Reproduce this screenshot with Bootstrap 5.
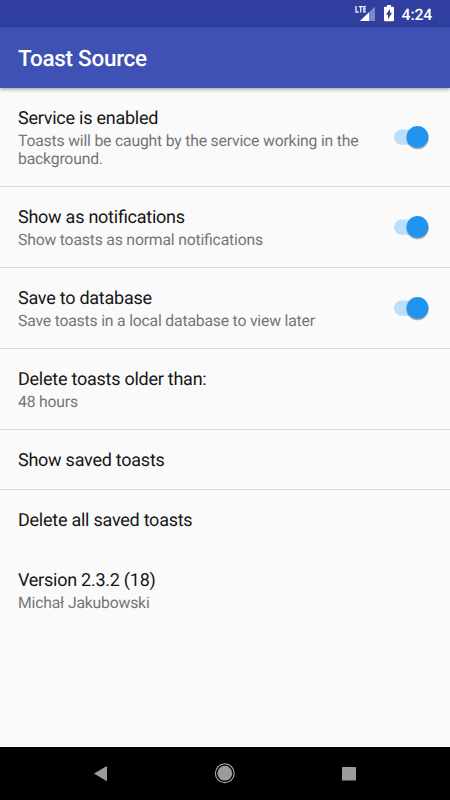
<!DOCTYPE html>
<html lang="en">
<head>
<meta charset="utf-8">
<meta name="viewport" content="width=device-width, initial-scale=1">
<title>Toast Source</title>
<link href="https://cdn.jsdelivr.net/npm/bootstrap@5.3.0/dist/css/bootstrap.min.css" rel="stylesheet">
<style>
body { font-family: Roboto, "Liberation Sans", sans-serif; background: #fafafa; height: 800px; overflow: hidden; text-rendering: geometricPrecision; font-feature-settings: "liga" 1; }
.status-strip { height: 27px; background: #303f9f; padding-right: 18px; }
.status-clock { font-size: 15.75px; line-height: 27px; font-weight: 500; letter-spacing: -.15px; margin-left: 6px; padding-top: 1px; }
.app-head { height: 61px; background: #3f51b5; padding: 2px 18px 0; box-shadow: 0 1px 4px rgba(0,0,0,.42); z-index: 1; }
.app-title { font-size: 22.5px; line-height: 26px; font-weight: 500; letter-spacing: -.28px; }
.pref { padding: 20px 18px 17px; border: 0; border-bottom: 1px solid #dadada; background: transparent; border-radius: 0; height: 81.25px; }
.pref-tall { height: 98.5px; }
.pref-short { height: 60px; }
.pref-last { border-bottom: 0; }
.pref-name { font-size: 18px; line-height: 21px; letter-spacing: -.25px; color: #161616; }
.pref-note { font-size: 15.75px; line-height: 18px; letter-spacing: -.19px; color: #757575; margin-top: 3px; }
.toggle { width: 40px; height: 32px; margin: -3px -1px 0 0; }
.nav-strip { height: 53px; background: #000; }
</style>
</head>
<body class="d-flex flex-column">
<div class="status-strip d-flex justify-content-end align-items-center text-white flex-shrink-0">
  <svg width="42" height="27" viewBox="0 0 42 27" aria-hidden="true">
    <path d="M2 6v6.200h2.800M4.800 6.600h4M6.800 6.600v5.900M12 6.600H9.900v5.300H12M9.900 9.200h2" fill="none" stroke="#fff" stroke-width="1.2"/>
    <path d="M21 6.500v14.500H6z" fill="#7f89c5"/>
    <path d="M15 12.300v8.700H6z" fill="#fff"/>
    <path d="M33 5h4v1.700h2q1 0 1 1v12.500q0 1-1 1h-8q-1 0-1-1V7.700q0-1 1-1h2z" fill="#fff"/>
    <path d="M36 8.700v4h2l-4 6.600v-4.600h-2z" fill="#303f9f"/>
  </svg>
  <span class="status-clock">4:24</span>
</div>
<header class="app-head d-flex align-items-center position-relative flex-shrink-0 text-white">
  <h1 class="app-title mb-0">Toast Source</h1>
</header>
<svg class="d-none" aria-hidden="true">
  <symbol id="switch-on" viewBox="0 0 40 32">
    <rect x="1" y="8.600" width="31" height="15.200" rx="7.600" fill="#bbdefb"/>
    <circle cx="24.500" cy="17.400" r="11.200" fill="#000" opacity=".16"/>
    <circle cx="24.500" cy="16.900" r="11" fill="#000" opacity=".2"/>
    <circle cx="24.500" cy="15.900" r="10.900" fill="#2194f0"/>
  </symbol>
</svg>
<main class="list-group list-group-flush flex-grow-1 rounded-0">
  <div class="list-group-item pref pref-tall d-flex justify-content-between align-items-center">
    <div><div class="pref-name">Service is enabled</div><div class="pref-note">Toasts will be caught by the service working in the<br>background.</div></div>
    <svg class="toggle flex-shrink-0" role="img" aria-label="On"><use href="#switch-on"/></svg>
  </div>
  <div class="list-group-item pref d-flex justify-content-between align-items-center">
    <div><div class="pref-name">Show as notifications</div><div class="pref-note">Show toasts as normal notifications</div></div>
    <svg class="toggle flex-shrink-0" role="img" aria-label="On"><use href="#switch-on"/></svg>
  </div>
  <div class="list-group-item pref d-flex justify-content-between align-items-center">
    <div><div class="pref-name">Save to database</div><div class="pref-note">Save toasts in a local database to view later</div></div>
    <svg class="toggle flex-shrink-0" role="img" aria-label="On"><use href="#switch-on"/></svg>
  </div>
  <div class="list-group-item pref"><div class="pref-name">Delete toasts older than:</div><div class="pref-note">48 hours</div></div>
  <div class="list-group-item pref pref-short"><div class="pref-name">Show saved toasts</div></div>
  <div class="list-group-item pref pref-short pref-last"><div class="pref-name">Delete all saved toasts</div></div>
  <div class="list-group-item pref pref-last"><div class="pref-name">Version 2.3.2 (18)</div><div class="pref-note">Michał Jakubowski</div></div>
</main>
<nav class="nav-strip d-flex flex-shrink-0">
  <svg width="450" height="53" viewBox="0 0 450 53" fill="#9b9b9b" aria-label="Back, Home, Overview">
    <path d="M94 26.500 106 19.500q1-.4 1 .5v13.500q0 .9-1 .3z"/>
    <circle cx="224.800" cy="26.200" r="7.400"/>
    <circle cx="224.800" cy="26.200" r="9.400" fill="none" stroke="#b0b0b0" stroke-width="1.100"/>
    <rect x="342" y="20" width="14" height="13.600" rx=".7"/>
  </svg>
</nav>
<script src="https://cdn.jsdelivr.net/npm/bootstrap@5.3.0/dist/js/bootstrap.bundle.min.js"></script>
</body>
</html>
